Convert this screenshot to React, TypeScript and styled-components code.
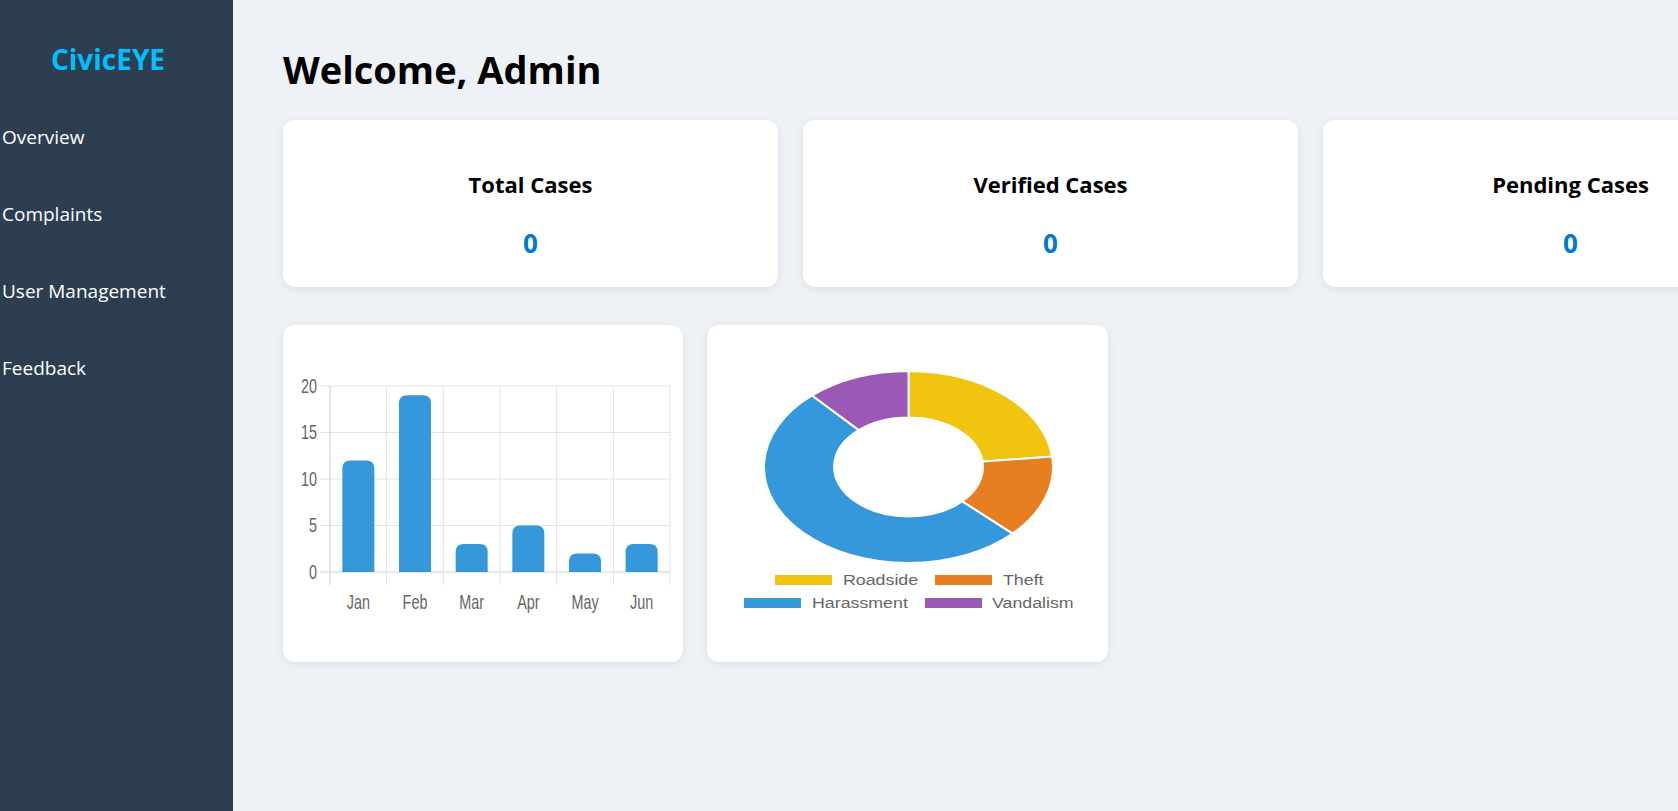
import React from 'react';
import styled, { createGlobalStyle } from 'styled-components';

const GlobalStyle = createGlobalStyle`
    html, body {
        margin : 0;
        padding : 0;
        overflow : hidden;
    }
    body {
        font-family : "Open Sans", "Noto Sans", sans-serif;
        background-color : #eef2f7;
    }
`;

const Layout = styled.div`
    display : flex;
    min-height : 100vh;
`;
const Sidebar = styled.aside`
    flex : 0 0 233px;
    background-color : #2c3e50;
    padding-top : 40px;
`;
const Logo = styled.h2`
    margin : 0;
    padding-right : 17px;
    text-align : center;
    font-size : 28px;
    font-weight : 700;
    line-height : 38px;
    color : #00bfff;
`;
const NavList = styled.ul`
    list-style : none;
    margin : 21px 0 0;
    padding : 0;
`;
const NavItem = styled.li`
    padding : 25px 2px;
    font-size : 19px;
    line-height : 27px;
    color : #ffffff;
    cursor : pointer;
`;
const Main = styled.main`
    flex : 1;
    padding : 43px 0 0 50px;
`;
const Title = styled.h1`
    margin : 0 0 25px;
    font-size : 38px;
    line-height : 52px;
    font-weight : 700;
    color : #000000;
`;
const StatsRow = styled.div`
    display : grid;
    grid-template-columns : repeat(3, 495px);
    gap : 25px;
    margin-bottom : 38px;
`;
const Card = styled.div`
    background-color : #ffffff;
    border-radius : 12px;
    box-shadow : 0 2px 8px rgba(0, 0, 0, 0.08);
`;
const StatCard = styled(Card)`
    display : flex;
    flex-direction : column;
    align-items : center;
    height : 167px;
    box-sizing : border-box;
    padding : 49px 20px 0;
`;
const StatLabel = styled.h3`
    margin : 0 0 26px;
    font-size : 22px;
    font-weight : 700;
    color : #000000;
`;
const StatValue = styled.p`
    margin : 0;
    font-size : 26px;
    font-weight : 700;
    color : #0078d4;
`;
const ChartsRow = styled.div`
    display : grid;
    grid-template-columns : 400px 401px;
    gap : 24px;
`;
const ChartCard = styled(Card)`
    height : 337px;
    overflow : hidden;
`;
const ChartSvg = styled.svg`
    display : block;
    width : 100%;
    height : 100%;
    font-family : "Liberation Sans", Arial, sans-serif;
`;

const stats = [
    { key : 1, label : 'Total Cases', value : 0 },
    { key : 2, label : 'Verified Cases', value : 0 },
    { key : 3, label : 'Pending Cases', value : 0 },
];

const monthly = [
    { month : 'Jan', count : 12 },
    { month : 'Feb', count : 19 },
    { month : 'Mar', count : 3 },
    { month : 'Apr', count : 5 },
    { month : 'May', count : 2 },
    { month : 'Jun', count : 3 },
];

const categories = [
    { label : 'Roadside', count : 10, color : '#f1c40f' },
    { label : 'Theft', count : 6, color : '#e67e22' },
    { label : 'Harassment', count : 22, color : '#3498db' },
    { label : 'Vandalism', count : 5, color : '#9b59b6' },
];

// plot area inside the bar card
const PLOT = { left : 47, right : 387, top : 61, bottom : 247, max : 20 };

const BarChart: React.FC = () => {
    const colWidth = (PLOT.right - PLOT.left) / monthly.length;
    const unit = (PLOT.bottom - PLOT.top) / PLOT.max;
    const ticks = [0, 5, 10, 15, 20];

    return (
        <ChartSvg viewBox="0 0 400 337">
            {ticks.map((t) => {
                const y = PLOT.bottom - t * unit;
                return (
                    <g key={t}>
                        <line x1={37} x2={PLOT.right} y1={y} y2={y}
                            stroke={t === 0 ? '#cfcfcf' : '#e2e2e2'} strokeWidth={1} />
                        <text transform={`translate(34 ${y}) scale(0.72 1)`} textAnchor="end"
                            dominantBaseline="central" fontSize={20} fill="#666">{t}</text>
                    </g>
                );
            })}
            {monthly.map((m, i) => (
                <line key={`v${i}`} x1={PLOT.left + i * colWidth} x2={PLOT.left + i * colWidth}
                    y1={PLOT.top} y2={260} stroke={i === 0 ? '#cfcfcf' : '#e2e2e2'} strokeWidth={1} />
            ))}
            <line x1={PLOT.right} x2={PLOT.right} y1={PLOT.top} y2={260} stroke="#e2e2e2" />
            {monthly.map((m, i) => {
                const cx = PLOT.left + colWidth * (i + 0.5);
                const h = m.count * unit;
                const x = cx - 16;
                const y = PLOT.bottom - h;
                const r = Math.min(8, h / 2);
                const d = `M${x} ${PLOT.bottom} V${y + r} Q${x} ${y} ${x + r} ${y} H${x + 32 - r} Q${x + 32} ${y} ${x + 32} ${y + r} V${PLOT.bottom} Z`;
                return (
                    <g key={m.month}>
                        <path d={d} fill="#3498db" />
                        <text transform={`translate(${cx} 277) scale(0.72 1)`} textAnchor="middle"
                            dominantBaseline="central" fontSize={20} fill="#666">{m.month}</text>
                    </g>
                );
            })}
        </ChartSvg>
    );
};

const pt = (a: number, rad: number) => `${(rad * Math.sin(a)).toFixed(2)} ${(-rad * Math.cos(a)).toFixed(2)}`;

const legend = [
    { idx : 0, box : 68, text : 136, y : 255 },
    { idx : 1, box : 228, text : 296, y : 255 },
    { idx : 2, box : 37, text : 105, y : 278 },
    { idx : 3, box : 218, text : 285, y : 278 },
];

const DoughnutChart: React.FC = () => {
    const total = categories.reduce((s, c) => s + c.count, 0);
    const R = 96;
    const r = 49.5;
    let angle = 0;
    const slices = categories.map((c) => {
        const a0 = angle;
        const a1 = angle + (c.count / total) * Math.PI * 2;
        angle = a1;
        const large = a1 - a0 > Math.PI ? 1 : 0;
        const d = `M${pt(a0, R)} A${R} ${R} 0 ${large} 1 ${pt(a1, R)} L${pt(a1, r)} A${r} ${r} 0 ${large} 0 ${pt(a0, r)} Z`;
        return <path key={c.label} d={d} fill={c.color} stroke="#fff" strokeWidth={2} vectorEffect="non-scaling-stroke" />;
    });

    return (
        <ChartSvg viewBox="0 0 401 337">
            <g transform="translate(201.5 142) scale(1.505 1)">{slices}</g>
            {legend.map((l) => {
                const c = categories[l.idx];
                return (
                    <g key={c.label}>
                        <rect x={l.box} y={l.y - 5} width={57} height={10} fill={c.color} />
                        <text transform={`translate(${l.text} ${l.y}) scale(1.27 1)`} dominantBaseline="central"
                            fontSize={14} fill="#666">{c.label}</text>
                    </g>
                );
            })}
        </ChartSvg>
    );
};

const App: React.FC = () => {
    return (
        <React.Fragment>
            <GlobalStyle />
            <Layout>
                <Sidebar>
                    <Logo>CivicEYE</Logo>
                    <NavList>
                        <NavItem>Overview</NavItem>
                        <NavItem>Complaints</NavItem>
                        <NavItem>User Management</NavItem>
                        <NavItem>Feedback</NavItem>
                    </NavList>
                </Sidebar>
                <Main>
                    <Title>Welcome, Admin</Title>
                    <StatsRow>
                        {stats.map((s) => (
                            <StatCard key={s.key}>
                                <StatLabel>{s.label}</StatLabel>
                                <StatValue>{s.value}</StatValue>
                            </StatCard>
                        ))}
                    </StatsRow>
                    <ChartsRow>
                        <ChartCard><BarChart /></ChartCard>
                        <ChartCard><DoughnutChart /></ChartCard>
                    </ChartsRow>
                </Main>
            </Layout>
        </React.Fragment>
    );
};

export default App;
